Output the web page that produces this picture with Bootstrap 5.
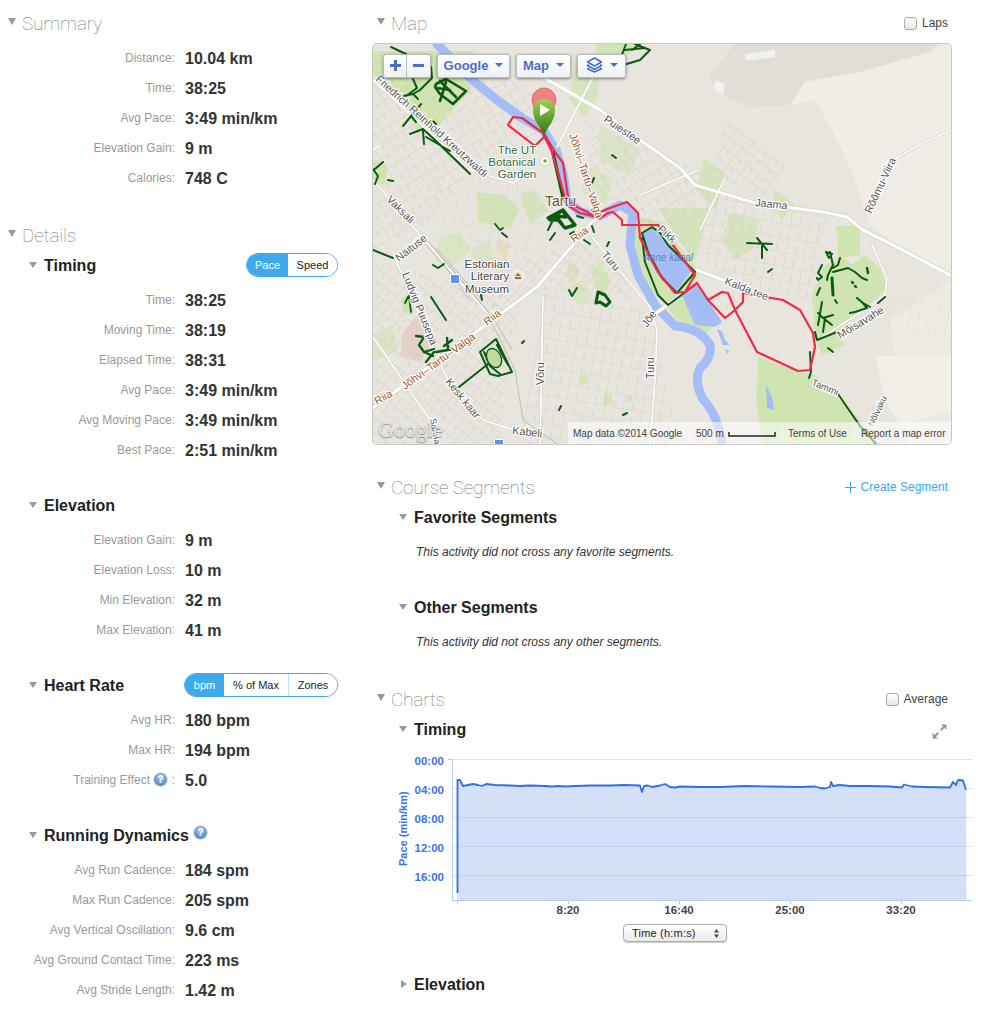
<!DOCTYPE html>
<html lang="en"><head><meta charset="utf-8"><title>Activity</title>
<link rel="stylesheet" href="https://cdn.jsdelivr.net/npm/bootstrap@5.3.0/dist/css/bootstrap.min.css">
<style>
body{font-family:"Liberation Sans",Arial,sans-serif;background:#fff;color:#333;margin:0;overflow-x:hidden}
.page-cols{width:1004px}
.col-left{width:372px;flex:none}
.col-right{width:632px;flex:none}
.tri{display:inline-block;width:0;height:0;border-style:solid;border-width:7px 4.5px 0 4.5px;border-color:#999 transparent transparent transparent;flex:none}
.sec-head{height:24px;display:flex;align-items:center}
.sec-head .tri{margin:-4px 0 0 8px}
.sec-head .tri-r{margin-left:5px}
.sec-top{margin-top:11px}
.sec-title{font-family:Roboto,"Liberation Sans",sans-serif;font-weight:100;font-size:19px;letter-spacing:-.2px;color:#777;margin:0 0 0 6px;line-height:24px;padding-top:2px}
.sub-head{height:24px;display:flex;align-items:center;padding-left:29px}
.sub-head .tri{border-width:6px 4px 0 4px;margin-top:-1px}
.sub-head .tri-closed{border-width:4px 0 4px 6px;border-color:transparent transparent transparent #999;margin-left:2px}
.sub-title{font-size:16px;font-weight:700;color:#222;margin:0 0 0 7px;line-height:24px;padding-top:2px}
.stat-list{margin:8px 0 0}
.stat-row{display:flex;height:30px;align-items:center}
.stat-row dt{width:175px;text-align:right;font-size:12px;font-weight:400;color:#999;margin:0}
.stat-row dd{font-size:16px;font-weight:700;color:#333;margin:0 0 0 10px;padding-top:2px}
.help-in{vertical-align:-3px}
.help-up{margin-top:-5px}
.gap-sec{margin-top:28px}.gap-big{margin-top:30px}.gap-map{margin-top:31px}.gap-sub{margin-top:6px}
.seg-group{width:auto;margin-left:auto;margin-right:34px;border:1px solid #3fa9ec;border-radius:12px;height:24px;overflow:hidden;display:flex}
.seg-btn{font-size:11px;line-height:22px;padding:0;border:0;background:#fff;color:#222;border-radius:0;text-align:center}
.seg-btn+.seg-btn{border-left:1px solid #bfe0f7}
.seg-on{background:#3fa9ec;color:#fff}
.seg-on+.seg-btn{border-left:0}
.w39{width:39px}.w64{width:64px}.w49{width:49px}.w41{width:41px}
.chk-label{margin-left:auto;display:flex;align-items:center;font-size:12px;color:#444;padding-right:4px;margin-bottom:0}
.chk-box{width:13px;height:13px;margin:0 5px 0 0;border:1px solid #aaa;border-radius:3px;background:linear-gradient(#fff,#e6e6e6);float:none}
.map-box{position:relative;width:578px;height:400px;margin:9px 0 0 1px;border-radius:4px;overflow:hidden;box-shadow:0 0 0 1px #c6c6c6}
.map-box svg{display:block}
.map-tools{position:absolute;left:10px;top:10px;display:flex;gap:6px}
.map-btn{height:24px;background:linear-gradient(#fff,#eef1f6);border:1px solid #bbb;border-radius:3px;box-shadow:0 1px 3px rgba(0,0,0,.45);font-size:13px;font-weight:700;color:#4a6fc0;padding:0 0 2px;display:flex;align-items:center;justify-content:center;line-height:1}
.map-btn:hover{color:#4a6fc0}
.map-split{display:flex;box-shadow:0 1px 3px rgba(0,0,0,.45);border-radius:3px}
.map-split .map-btn{box-shadow:none;width:24px}
.map-split .map-btn:first-child{border-radius:3px 0 0 3px;border-right:1px solid #bbb}
.map-split .map-btn:last-child{border-radius:0 3px 3px 0;border-left:0}
.caret-d{display:inline-block;width:0;height:0;border:4px solid transparent;border-top:4.5px solid #4a6fc0;border-bottom:0;margin-left:7px}
.w73{width:73px}.w55{width:55px}
.map-attr{position:absolute;right:0;bottom:0;height:22px;width:383px;background:rgba(255,255,255,.55);font-size:10px;color:#444;display:flex;align-items:center}
.attr-a{width:121px;padding-left:5px}
.attr-b{width:93px;padding-left:6px;border-left:1px solid rgba(255,255,255,.7);display:flex;align-items:center;gap:4px}
.attr-c{width:72px;padding-left:5px;border-left:1px solid rgba(255,255,255,.7)}
.attr-d{padding-left:6px;border-left:1px solid rgba(255,255,255,.7)}
.scale-bar{width:48px;height:5px;border:2px solid #555;border-top:0;display:inline-block;margin-top:2px}
.map-logo{position:absolute;left:5px;bottom:2px;font-family:"Liberation Serif",serif;font-size:22px;color:rgba(255,255,255,.75);text-shadow:0 0 1px #999,0 1px 1px #888;line-height:24px}
.seg-link{margin-left:auto;font-size:12px;color:#3fa9ec;text-decoration:none;padding-right:4px;display:flex;align-items:center;gap:5px}
.seg-link:hover{color:#3fa9ec}
.r-sub{padding-left:27px}
.seg-note{height:30px;margin:8px 0 0 44px;font-size:12px;font-style:italic;color:#333;display:flex;align-items:center}
.chart-svg{display:block}
.time-select{display:flex;justify-content:center;width:600px;margin-top:6px}
.sel-btn{width:104px;height:18px;margin-left:6px;padding:0 6px 0 8px;border:1px solid #aaa;border-radius:4px;background:linear-gradient(#fff,#ebebeb);box-shadow:0 1px 1px rgba(0,0,0,.2);font-size:11px;color:#222;display:flex;align-items:center;justify-content:space-between;letter-spacing:.2px}
.expand-ico{margin-left:auto;margin-right:5px;margin-top:4px}
.r-head-w{width:580px}
.lbl-g{paint-order:stroke}
</style></head>
<body>
<div class="d-flex page-cols">
<!-- LEFT -->
<div class="col-left">
  <div class="sec-head sec-top"><span class="tri"></span><h2 class="sec-title">Summary</h2></div>
  <dl class="stat-list">
    <div class="stat-row"><dt>Distance:</dt><dd>10.04 km</dd></div>
    <div class="stat-row"><dt>Time:</dt><dd>38:25</dd></div>
    <div class="stat-row"><dt>Avg Pace:</dt><dd>3:49 min/km</dd></div>
    <div class="stat-row"><dt>Elevation Gain:</dt><dd>9 m</dd></div>
    <div class="stat-row"><dt>Calories:</dt><dd>748 C</dd></div>
  </dl>
  <div class="sec-head gap-big"><span class="tri"></span><h2 class="sec-title">Details</h2></div>
  <div class="sub-head gap-sub"><span class="tri"></span><h3 class="sub-title">Timing</h3>
    <div class="seg-group" role="group"><button class="btn seg-btn seg-on w41">Pace</button><button class="btn seg-btn w49">Speed</button></div></div>
  <dl class="stat-list">
    <div class="stat-row"><dt>Time:</dt><dd>38:25</dd></div>
    <div class="stat-row"><dt>Moving Time:</dt><dd>38:19</dd></div>
    <div class="stat-row"><dt>Elapsed Time:</dt><dd>38:31</dd></div>
    <div class="stat-row"><dt>Avg Pace:</dt><dd>3:49 min/km</dd></div>
    <div class="stat-row"><dt>Avg Moving Pace:</dt><dd>3:49 min/km</dd></div>
    <div class="stat-row"><dt>Best Pace:</dt><dd>2:51 min/km</dd></div>
  </dl>
  <div class="sub-head gap-sec"><span class="tri"></span><h3 class="sub-title">Elevation</h3></div>
  <dl class="stat-list">
    <div class="stat-row"><dt>Elevation Gain:</dt><dd>9 m</dd></div>
    <div class="stat-row"><dt>Elevation Loss:</dt><dd>10 m</dd></div>
    <div class="stat-row"><dt>Min Elevation:</dt><dd>32 m</dd></div>
    <div class="stat-row"><dt>Max Elevation:</dt><dd>41 m</dd></div>
  </dl>
  <div class="sub-head gap-sec"><span class="tri"></span><h3 class="sub-title">Heart Rate</h3>
    <div class="seg-group" role="group"><button class="btn seg-btn seg-on w39">bpm</button><button class="btn seg-btn w64">% of Max</button><button class="btn seg-btn w49">Zones</button></div></div>
  <dl class="stat-list">
    <div class="stat-row"><dt>Avg HR:</dt><dd>180 bpm</dd></div>
    <div class="stat-row"><dt>Max HR:</dt><dd>194 bpm</dd></div>
    <div class="stat-row"><dt>Training Effect <svg width="15" height="15" viewBox="0 0 15 15" class="help-in"><use href="#help"/></svg> :</dt><dd>5.0</dd></div>
  </dl>
  <div class="sub-head gap-sec"><span class="tri"></span><h3 class="sub-title">Running Dynamics</h3><svg width="15" height="15" viewBox="0 0 15 15" class="ms-1 help-up"><use href="#help"/></svg></div>
  <dl class="stat-list">
    <div class="stat-row"><dt>Avg Run Cadence:</dt><dd>184 spm</dd></div>
    <div class="stat-row"><dt>Max Run Cadence:</dt><dd>205 spm</dd></div>
    <div class="stat-row"><dt>Avg Vertical Oscillation:</dt><dd>9.6 cm</dd></div>
    <div class="stat-row"><dt>Avg Ground Contact Time:</dt><dd>223 ms</dd></div>
    <div class="stat-row"><dt>Avg Stride Length:</dt><dd>1.42 m</dd></div>
  </dl>
</div>
<!-- RIGHT -->
<div class="col-right">
  <div class="sec-head r-head-w sec-top"><span class="tri tri-r"></span><h2 class="sec-title">Map</h2>
    <label class="chk-label"><input type="checkbox" class="form-check-input chk-box">Laps</label></div>
  <div class="map-box">
<svg width="578" height="400" viewBox="373 44 578 400" xmlns="http://www.w3.org/2000/svg" font-family="Liberation Sans, sans-serif">
<defs>
<pattern id="st1" width="17" height="12" patternUnits="userSpaceOnUse" patternTransform="rotate(-32)"><path d="M0 0H17M0 0V12M9 0V6" stroke="#cdc8ba" stroke-width=".7" fill="none"/></pattern>
<pattern id="st2" width="19" height="14" patternUnits="userSpaceOnUse" patternTransform="rotate(10)"><path d="M0 0H19M0 0V14M10 7V14" stroke="#cdc8ba" stroke-width=".7" fill="none"/></pattern>
<pattern id="st3" width="15" height="11" patternUnits="userSpaceOnUse" patternTransform="rotate(38)"><path d="M0 0H15M0 0V11M7 0V5" stroke="#cdc8ba" stroke-width=".7" fill="none"/></pattern>
<linearGradient id="pinG" x1="0" y1="0" x2="0" y2="1"><stop offset="0" stop-color="#a4d257"/><stop offset=".55" stop-color="#5f9a2c"/><stop offset="1" stop-color="#2f6e1a"/></linearGradient>
<g id="rd-major" fill="none" stroke-linecap="round" stroke-linejoin="round"><path d="M373 408L537 287L577 240L592 222L604 214"/><path d="M545 78L600 110L640 140L680 168L695 185L755 203L823 212L847 217L863 230L887 242L950 275"/><path d="M697 270L723 280L763 295"/><path d="M647 320L697 283"/></g>
<g id="rd-minor" fill="none" stroke-linecap="round" stroke-linejoin="round"><path d="M872 245L887 278L885 295L875 303L818 340"/><path d="M592 237L650 307L657 330L655 380L650 444"/><path d="M543 297L540 444"/><path d="M373 80L470 170L513 183L533 170"/><path d="M373 180L420 235L487 313"/><path d="M593 77L557 147"/><path d="M437 357L453 390L483 420L513 430L540 432"/><path d="M373 250L395 258L420 235"/><path d="M395 258L437 357"/><path d="M373 337L430 420L440 444"/><path d="M725 178L700 230"/><path d="M640 195L698 170"/><path d="M867 213L892 160L925 142L951 130"/><path d="M380 145L373 150"/></g>
</defs>
<rect x="373" y="44" width="578" height="400" fill="#e8e5de"/>
<path d="M735 44L708 77L722 95L750 107L790 105L805 82L860 72L930 52L940 44Z" fill="#e1ded7"/>
<path d="M940 44L951 44V272L905 250L870 225L855 180L840 145L816 100L790 105L805 82L860 72L930 52Z" fill="#f0ede6"/>
<path d="M890 320L951 280V444H910L900 400Z" fill="#eeebe4"/>
<path d="M875 356H951V410L900 425L885 400Z" fill="#f1efe8"/>
<path d="M715 80L725 84L723 95L715 90Z M745 54L775 50L775 57L746 61Z" fill="#f2f1ed"/>
<!-- parks -->
<g fill="#cfe4b0">
<path d="M758 357L800 372L815 375L835 395L868 428L880 444H762L756 400Z"/>
<path d="M812 295L825 265L842 257L852 265L865 255L880 268L887 288L872 302L838 335L845 345L822 355L815 338Z"/>
<path d="M373 51L473 51L470 91L440 124L416 134L410 111L390 87L373 74Z"/>
<path d="M373 160L387 165L385 184L373 184Z"/>
<path d="M477 192L505 195L520 210L510 228L478 222Z" opacity=".85"/>
<path d="M520 195L535 190L548 210L530 225Z" opacity=".7"/>
<path d="M575 60L600 50L598 95L585 118L570 100Z" opacity=".7"/>
<path d="M596 44H640L612 68L598 56Z"/>
<path d="M658 208L708 208L695 262L675 235Z" opacity=".7"/>
<path d="M632 215L660 222L700 272L688 292L668 306L650 290L638 262Z"/>
<path d="M668 308L685 295L712 328L705 335L680 325Z"/>
<path d="M600 125L640 150L630 175L600 160Z" opacity=".5"/>
<path d="M585 165L612 178L606 205L582 192Z" opacity=".55"/>
<path d="M704 158L725 172L716 210L696 190Z" opacity=".7"/>
<path d="M730 212L760 220L752 250L735 260L722 240Z" opacity=".65"/>
<path d="M775 190L795 205L782 218L770 208Z" opacity=".7"/>
<path d="M836 226H860V255L838 258Z"/>
<path d="M402 298L412 294L412 316L402 312Z"/>
<path d="M438 238L460 232L470 250L450 268L436 260Z" opacity=".6"/>
<path d="M470 250L490 240L496 262L478 272Z" opacity=".5"/>
<path d="M590 270L600 262L612 282L604 296L596 290Z" opacity=".75"/>
<path d="M570 285L585 280L592 300L578 305Z" opacity=".55"/>
<path d="M373 335L392 325L398 350L373 362Z" opacity=".5"/>
<path d="M580 375L588 375L588 384L580 384ZM604 394L612 394L612 405L604 405ZM627 395L632 395L632 402L627 402Z" opacity=".85"/>
</g>
<path d="M403 332L420 312L434 340L420 362L400 356Z" fill="#e6c9c3" opacity=".75"/>
<path d="M498 238L510 246L506 260L497 252ZM568 262L580 268L576 282L566 276Z" fill="#e6d9b8" opacity=".7"/>
<!-- street textures -->
<path d="M373 60H500L560 120L470 170L420 230L373 250Z" fill="url(#st1)"/>
<path d="M540 290L650 310L680 444H520Z" fill="url(#st2)"/>
<path d="M373 260L520 300L500 444H373Z" fill="url(#st3)"/>
<path d="M590 120L700 170L690 260L640 220L590 190Z" fill="url(#st1)"/>
<path d="M700 190L830 215L810 300L760 290L700 260Z" fill="url(#st2)"/>
<path d="M590 235L640 300L540 290L490 310L500 270Z" fill="url(#st3)"/>
<path d="M725 120L785 165L770 198L710 178Z" fill="url(#st3)"/>
<path d="M885 300L951 290V350L890 335Z" fill="url(#st2)" opacity=".5"/>
<path d="M425 190L470 175L530 185L570 240L500 270L440 240Z" fill="url(#st2)" opacity=".7"/>
<!-- water -->
<path d="M437 44L470 78L497 100L522 118L543 130L556 150L563 173L567 200L580 212L600 216L620 205L633 212L630 245L638 275L655 305L675 326Q700 328 710 345Q712 358 700 368Q694 380 702 398Q718 415 722 444" fill="none" stroke="#a4bdf7" stroke-width="9" stroke-linejoin="round" stroke-linecap="round"/>
<path d="M642 232L652 228L668 245L692 270L675 293L658 275L645 252Z" fill="#a4bdf7"/>
<path d="M685 292L697 283L722 322L715 327L695 325L682 295Z" fill="#a4bdf7"/>
<path d="M717 329L722 331L725 340L730 345L723 345ZM725 348L729 352L727 354ZM766 385L772 397L774 410L767 408Z" fill="#a4bdf7"/>
<!-- railway -->
<g fill="none" stroke="#bdbcb7" stroke-width="1"><path d="M418 236L487 313L515 370L523 420L557 444"/><path d="M423 238L489 313"/><path d="M427 240L492 316L512 350"/><path d="M431 248L470 300"/><path d="M436 248L482 300"/></g>
<!-- roads -->
<use href="#rd-major" stroke="#cdc9bd" stroke-width="4.200"/>
<use href="#rd-minor" stroke="#cfcbc0" stroke-width="2.600"/>
<use href="#rd-major" stroke="#fff" stroke-width="3.200"/>
<use href="#rd-minor" stroke="#fff" stroke-width="1.700"/>
<!-- tracks -->
<g fill="none" stroke="#0b5a12" stroke-width="2" stroke-linecap="round" stroke-linejoin="round">
<path d="M391 47L406 54M431 67L432 78L420 90L413 94L403 96M413 79L417 88L406 96M413 94L418 99M421 104L403 126M411 116L416 122M433 121L436 124M410 134L423 129L436 141L470 174M423 131L424 144M426 137L450 151M385 87L386 89"/>
<path d="M436 84L446 79L466 91L453 104L440 94L435 87ZM440 81L456 97M446 82L440 101M437 88L450 90" stroke-width="2.600"/>
<path d="M375 169L383 162M373 169L378 176L375 184M388 180L393 181"/>
<path d="M620 60L626 44M635 44L650 50L640 60L620 66M640 44L632 50M625 50L645 48"/>
<path d="M553 153L563 197" stroke-width="3.400"/>
<path d="M548 218L563 210L566 217L556 216L562 224M563 210L575 225L565 228L558 220L550 220Z" stroke-width="3.400"/>
<path d="M550 240L555 233M577 216L583 218M594 205L598 208M591 185L594 178M612 155L616 158"/>
<path d="M552 222L548 230M594 232L592 226M570 234L574 232M609 242L607 246M584 240L590 244"/>
<path d="M373 250L393 258M433 265L438 268L444 264M502 233L507 237"/>
<path d="M408 297L405 303M409 296L411 312M495 224L500 230L503 228" stroke-width="1.800"/>
<path d="M431 297L446 320M481 295L482 300"/>
<path d="M416 336L424 337L419 345L424 352L433 356M424 352L434 349M426 362L434 352" stroke-width="2.300"/>
<path d="M436 352L448 350L447 338M444 346L452 340M450 350L447 344" stroke-width="2.300"/>
<path d="M459 387L488 364"/>
<path d="M480 352L496 339L512 372L498 376L490 374ZM484 352L490 366L500 374M497 345L508 365"/>
<ellipse cx="494" cy="358" rx="7" ry="10" transform="rotate(-25 494 358)" fill="#bfdca0" stroke-width="1.400"/>
<path d="M596 303L598 292L605 295L610 302L606 306L600 302Z" stroke-width="3"/>
<path d="M569 290L572 296L577 288M522 343L524 341M559 410L561 406M623 415L627 413"/>
<path d="M642 233L652 227L660 233L668 245L695 272L677 293L662 278L648 252Z"/>
<path d="M642 238L645 262L658 295L668 305L695 285"/>
<path d="M747 243L772 244M757 238L767 250M762 246L762 258M768 272L772 269"/>
<path d="M830 252L833 265L828 275L827 280M826 252L832 254L829 258ZM840 258L838 265L833 268M833 272L848 268L855 272L862 278L867 280M822 265L818 273L822 277L818 280L817 278M817 295L820 288M835 300L837 303M822 302L818 325M818 313L823 318L833 315M822 317L832 325M825 318L823 332M815 332L817 340L837 332M857 298L863 303L870 307M862 302L867 308L855 312L850 313M885 297L878 303M828 348L833 352"/>
<path d="M832 278L833 295" stroke-width="3"/>
<path d="M867 268L868 273M852 282L853 283M855 286L856 287" stroke-width="2.400"/>
<path d="M810 352L811 372L809 378M838 394L860 426L876 444"/>
</g>
<!-- route -->
<path d="M544 137L535 146L508 125L513 117L522 118L543 133L552 152L560 180L567 205L580 213L600 218L608 213L613 212L622 220L622 225L640 225L658 225L675 248L695 275L685 292L697 283L708 300L722 292L728 293L735 310L743 302L743 293L783 300L800 310L813 333L815 347L810 370L798 371L757 352L735 310L725 318L708 300L697 283L685 292L675 293L658 272L640 238L638 213L627 202L610 208L593 215L573 205L568 197L563 163L555 152L545 135" fill="none" stroke="#f02b47" stroke-width="2.200" stroke-linejoin="round" stroke-linecap="round"/>
<!-- markers -->
<circle cx="544" cy="100" r="12" fill="#f08080" stroke="#dc6f6f"/>
<path d="M544 137C541 126 533 122 533 110A11 11 0 0 1 555 110C555 122 547 126 544 137Z" fill="url(#pinG)"/>
<path d="M540 104L550 110L540 116Z" fill="#fff"/>
<circle cx="545" cy="161" r="4.500" fill="#fff" stroke="#cfd6c4"/><rect x="543.500" y="159.500" width="3" height="3" fill="#6aa51a"/>
<circle cx="518" cy="276" r="5.500" fill="#e9e2d4" stroke="#fff"/><path d="M515 277H521V279H515ZM518 273L521 276H515Z" fill="#a0703c"/>
<rect x="450.500" y="274.500" width="9" height="9" rx="1.500" fill="#5b93e6" stroke="#fff"/>
<rect x="494.500" y="439.500" width="9" height="6" rx="1" fill="#5b93e6" stroke="#fff"/>
<!-- labels -->
<g class="lbl-g" stroke="#fff" stroke-width="2.400" stroke-linejoin="round" font-size="10.800" fill="#555">
<text transform="translate(603 121) rotate(34)">Puiestee</text>
<text transform="translate(755 206) rotate(6)">Jaama</text>
<text transform="translate(871 214) rotate(-65)">Rõõmu-Viira</text>
<text transform="translate(724 284) rotate(21)">Kalda tee</text>
<text transform="translate(840 339) rotate(-31)">Mõisavahe</text>
<text transform="translate(811 385) rotate(22)" font-size="9.500">Tammi</text>
<text transform="translate(873 427) rotate(-64)" font-size="9">Nõlvaku</text>
<text transform="translate(375 80) rotate(42)">Friedrich Reinhold Kreutzwaldi</text>
<text transform="translate(386 200) rotate(45)">Vaksali</text>
<text transform="translate(399 262) rotate(-38)">Näituse</text>
<text transform="translate(402 274) rotate(68)">Ludvig Puusepa</text>
<text transform="translate(445 382) rotate(51)">Kesk kaar</text>
<text transform="translate(512 434) rotate(6)">Kabeli</text>
<text transform="translate(544 385) rotate(-90)">Võru</text>
<text transform="translate(654 379) rotate(-90)">Turu</text>
<text transform="translate(601 255) rotate(50)">Turu</text>
<text transform="translate(647 328) rotate(-55)">Jõe</text>
<text transform="translate(657 230) rotate(42)">Pikk</text>
<text transform="translate(430 419) rotate(80)" font-size="9">Sahna</text>
</g>
<g class="lbl-g" stroke="#fff" stroke-width="2.400" stroke-linejoin="round" font-size="10.800" fill="#9a5a2a">
<text transform="translate(569 135) rotate(72)">Jõhvi–Tartu–Valga</text>
<text transform="translate(377 405) rotate(-30)">Riia</text>
<text transform="translate(405 390) rotate(-36)">Jõhvi–Tartu–Valga</text>
<text transform="translate(487 326) rotate(-38)">Riia</text>
<text transform="translate(574 243) rotate(-36)">Riia</text>
</g>
<g class="lbl-g" stroke="#fff" stroke-width="2" stroke-linejoin="round" font-size="11.500" fill="#444" text-anchor="middle">
<text x="487" y="268">Estonian</text><text x="490" y="280">Literary</text><text x="487" y="293">Museum</text>
</g>
<g class="lbl-g" stroke="#fff" stroke-width="2" stroke-linejoin="round" font-size="11.500" fill="#2f6b3a" text-anchor="middle">
<text x="517" y="154">The UT</text><text x="512" y="166">Botanical</text><text x="517" y="178">Garden</text>
</g>
<text x="545" y="206" font-size="14" fill="#6b5030" class="lbl-g" stroke="#fff" stroke-width="1.500">Tartu</text>
<text x="643" y="261" font-size="10" font-style="italic" fill="#5f80c4">Anne kanal</text>
</svg>
    <div class="map-logo">Google</div>
    <div class="map-attr"><span class="attr-a">Map data ©2014 Google</span><span class="attr-b">500 m <span class="scale-bar"></span></span><span class="attr-c">Terms of Use</span><span class="attr-d">Report a map error</span></div>
    <div class="map-tools">
      <div class="map-split"><button class="btn map-btn" aria-label="Zoom in"><svg width="13" height="13" viewBox="0 0 13 13"><path d="M5 1H8V5H12V8H8V12H5V8H1V5H5Z" fill="#4a6fc0"/></svg></button><button class="btn map-btn" aria-label="Zoom out"><svg width="13" height="13" viewBox="0 0 13 13"><rect x="1" y="5" width="11" height="3" fill="#4a6fc0"/></svg></button></div>
      <button class="btn map-btn w73">Google<span class="caret-d"></span></button>
      <button class="btn map-btn w55">Map<span class="caret-d"></span></button>
      <button class="btn map-btn w49" aria-label="Layers"><svg width="17" height="16" viewBox="0 0 17 16" fill="none" stroke="#4a6fc0" stroke-width="1.500" stroke-linejoin="round"><path d="M8.500 1L15.500 5L8.500 9L1.500 5Z"/><path d="M3 7.700L1.500 8.500L8.500 12.500L15.500 8.500L14 7.700"/><path d="M3 11L1.500 11.800L8.500 15L15.500 11.800L14 11"/></svg><span class="caret-d"></span></button>
    </div>
  </div>

  <div class="sec-head r-head-w gap-map"><span class="tri tri-r"></span><h2 class="sec-title">Course Segments</h2>
    <a href="#" class="seg-link"><svg width="11" height="11" viewBox="0 0 11 11"><path d="M5.500 0V11M0 5.500H11" stroke="#3fa9ec" stroke-width="1"/></svg>Create Segment</a></div>
  <div class="sub-head r-sub gap-sub"><span class="tri"></span><h3 class="sub-title">Favorite Segments</h3></div>
  <p class="seg-note">This activity did not cross any favorite segments.</p>
  <div class="sub-head r-sub gap-sec"><span class="tri"></span><h3 class="sub-title">Other Segments</h3></div>
  <p class="seg-note">This activity did not cross any other segments.</p>

  <div class="sec-head r-head-w gap-big"><span class="tri tri-r"></span><h2 class="sec-title">Charts</h2>
    <label class="chk-label"><input type="checkbox" class="form-check-input chk-box">Average</label></div>
  <div class="sub-head r-sub gap-sub r-head-w"><span class="tri"></span><h3 class="sub-title">Timing</h3>
    <svg class="expand-ico" width="15" height="15" viewBox="0 0 15 15" fill="#999"><path d="M9 0.500H14.500V6L12.500 4L9.500 7L8 5.500L11 2.500Z"/><path d="M6 14.500H0.500V9L2.500 11L5.500 8L7 9.500L4 12.500Z"/></svg></div>
  <svg class="chart-svg" width="600" height="177" viewBox="372 741 600 177" font-family="Liberation Sans, sans-serif" xmlns="http://www.w3.org/2000/svg">
    <g stroke="#dfe5ee" stroke-width="1"><path d="M452 759.500H972M452 788.500H972M452 817.500H972M452 846.500H972M452 875.500H972"/></g>
    <path d="M457.500 900V780L460 780L463 786L468 785L473 784L478 785L482 786L486 784L495 785L510 785.500L520 786L530 785.500L545 786L552 786.500L558 786L565 786.500L575 786L590 785.500L610 785.500L625 785L640 785.500L642 792L644 786L648 785.500L652 787L660 785.500L665 784L670 787L675 787.500L680 786.500L700 787L720 787L745 786L770 786.500L800 787L815 786.500L820 788L825 788.500L830 787L831 782L833 786L840 785L850 786L870 786L890 786.500L902 787.500L904 784.500L912 786.500L925 787L950 787.500L953 782L956 785L958 780L963 780.500L966 788L966.500 900Z" fill="#d3e0f7"/>
    <g stroke="#c3d2ec" stroke-width="1"><path d="M458 817.500H967M458 846.500H967M458 875.500H967"/></g>
    <path d="M457.500 893V780L460 780L463 786L468 785L473 784L478 785L482 786L486 784L495 785L510 785.500L520 786L530 785.500L545 786L552 786.500L558 786L565 786.500L575 786L590 785.500L610 785.500L625 785L640 785.500L642 792L644 786L648 785.500L652 787L660 785.500L665 784L670 787L675 787.500L680 786.500L700 787L720 787L745 786L770 786.500L800 787L815 786.500L820 788L825 788.500L830 787L831 782L833 786L840 785L850 786L870 786L890 786.500L902 787.500L904 784.500L912 786.500L925 787L950 787.500L953 782L956 785L958 780L963 780.500L966 790" fill="none" stroke="#2f6fe4" stroke-width="1.800" stroke-linejoin="round"/>
    <path d="M452.500 759V900.500H972" fill="none" stroke="#b5c8e4" stroke-width="1"/>
    <path d="M448 759.500H452" stroke="#b5c8e4"/>
    <path d="M457.500 901V904M568.500 901V904M679.500 901V904M790.500 901V904M901.500 901V904" stroke="#b5c8e4"/>
    <g fill="#3a74e0" font-size="11.500" font-weight="700" text-anchor="end"><text x="444" y="765">00:00</text><text x="444" y="794">04:00</text><text x="444" y="823">08:00</text><text x="444" y="852">12:00</text><text x="444" y="881">16:00</text></g>
    <text transform="translate(407 866) rotate(-90)" fill="#3a74e0" font-size="11" font-weight="700">Pace (min/km)</text>
    <g fill="#444" font-size="11.500" font-weight="700" text-anchor="middle"><text x="568" y="914">8:20</text><text x="679" y="914">16:40</text><text x="790" y="914">25:00</text><text x="901" y="914">33:20</text></g>
  </svg>
  <div class="time-select"><button class="btn sel-btn" type="button">Time (h:m:s)<svg width="7" height="11" viewBox="0 0 7 11" fill="#444"><path d="M3.500 1L6 4.500H1ZM3.500 10L1 6.500H6Z"/></svg></button></div>
  <div class="sub-head r-sub gap-big"><span class="tri tri-closed"></span><h3 class="sub-title">Elevation</h3></div>
</div>
</div>
<svg width="0" height="0" class="position-absolute"><defs>
<radialGradient id="hg" cx=".5" cy=".35" r=".7"><stop offset="0" stop-color="#b4cdec"/><stop offset=".6" stop-color="#6a98d0"/><stop offset="1" stop-color="#4a7ab6"/></radialGradient>
<symbol id="help" viewBox="0 0 15 15"><circle cx="7.500" cy="7.500" r="6.800" fill="url(#hg)" stroke="#c7d6ea" stroke-width=".8"/><text x="7.500" y="11" text-anchor="middle" font-size="10" font-weight="700" fill="#fff" font-family="Liberation Sans, sans-serif">?</text></symbol>
</defs></svg>
<script src="https://cdn.jsdelivr.net/npm/bootstrap@5.3.0/dist/js/bootstrap.bundle.min.js"></script>
</body></html>
